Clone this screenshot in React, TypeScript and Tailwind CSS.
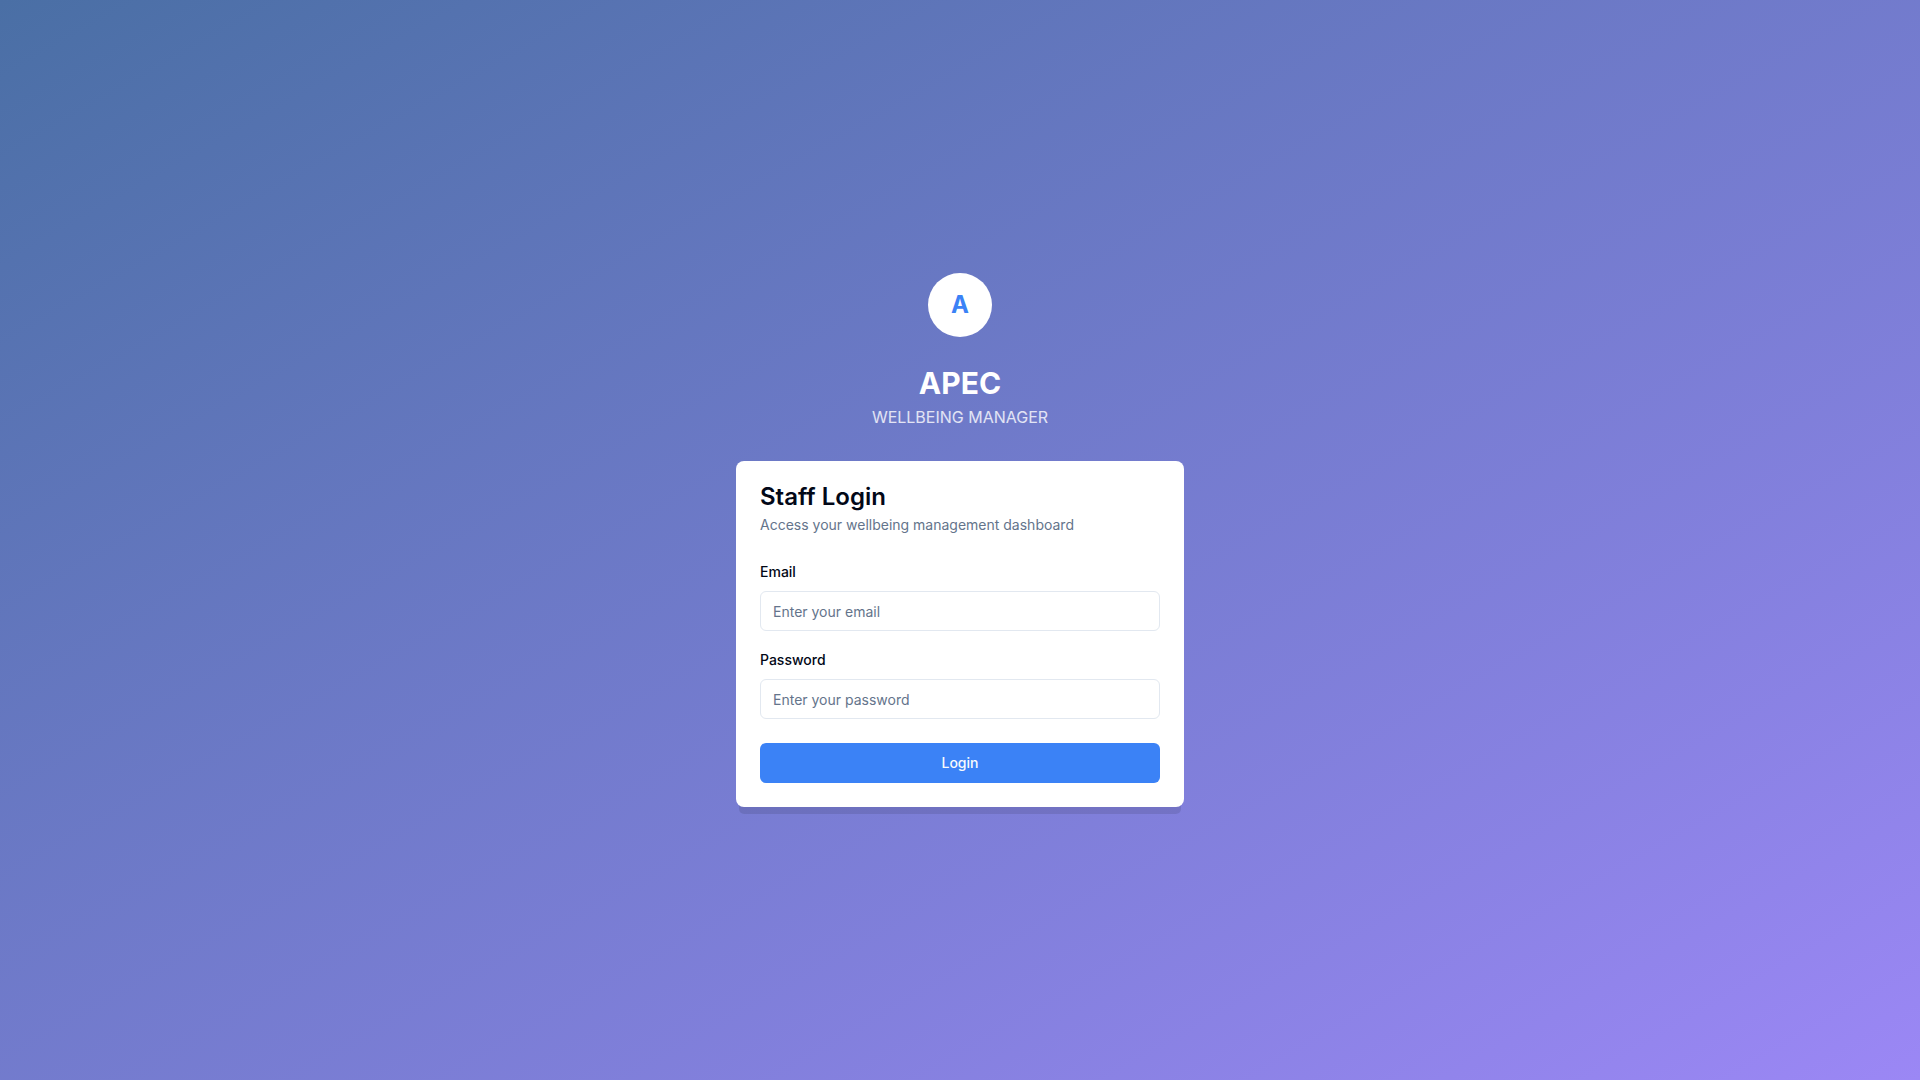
import type { InputHTMLAttributes } from "react";

type FieldProps = InputHTMLAttributes<HTMLInputElement> & { id: string; label: string };

function Field({ id, label, ...props }: FieldProps) {
  return (
    <div className="flex flex-col gap-2">
      <div>
        <label htmlFor={id} className="text-sm leading-none font-medium">
          {label}
        </label>
      </div>
      <input
        id={id}
        className="h-10 w-full rounded-md border border-slate-200 bg-white px-3 py-2 text-sm placeholder:text-[#64748b] focus:outline-2 focus:outline-offset-2 focus:outline-[#3b82f6]"
        {...props}
      />
    </div>
  );
}

export default function App() {
  return (
    <main className="flex min-h-screen flex-col items-center justify-center bg-[linear-gradient(to_bottom_right,#4a6fa5,#9b87f5)] p-4 font-['Inter',sans-serif] text-[#020817]">
      <div className="w-full max-w-md">
        <header className="mb-8 flex flex-col items-center text-center">
          <div className="mb-7 flex size-16 items-center justify-center rounded-full bg-white text-2xl font-bold text-[#3b82f6]">
            A
          </div>
          <h1 className="text-3xl font-bold text-white">APEC</h1>
          <p className="mt-1 text-white/80">WELLBEING MANAGER</p>
        </header>

        <section className="rounded-lg bg-white shadow-[0_10px_0_-3px_rgba(0,0,0,0.1)]">
          <div className="flex flex-col gap-1.5 p-6">
            <h2 className="text-2xl leading-none font-semibold">Staff Login</h2>
            <p className="text-sm text-[#64748b]">Access your wellbeing management dashboard</p>
          </div>
          <form className="px-6 pb-6" onSubmit={(event) => event.preventDefault()}>
            <div className="flex flex-col gap-4">
              <Field id="email" label="Email" type="email" placeholder="Enter your email" />
              <Field id="password" label="Password" type="password" placeholder="Enter your password" />
            </div>
            <button
              type="submit"
              className="mt-6 h-10 w-full rounded-md bg-[#3b82f6] px-4 py-2 text-sm font-medium text-slate-50 hover:bg-[#2f76ea]"
            >
              Login
            </button>
          </form>
        </section>
      </div>
    </main>
  );
}
